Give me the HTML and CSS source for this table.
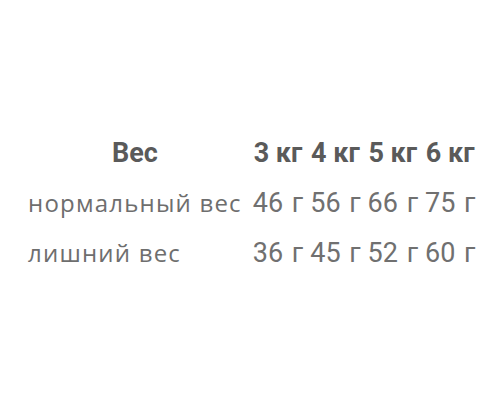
FILE: index.html
```html
<!DOCTYPE html>
<html lang="ru">
<head>
<meta charset="utf-8">
<link rel="stylesheet" href="styles.css">
</head>
<body>
<div class="page">
  <table class="weights">
    <thead>
      <tr>
        <th class="name">Вес</th>
        <th class="num">3 кг</th>
        <th class="num">4 кг</th>
        <th class="num">5 кг</th>
        <th class="num">6 кг</th>
      </tr>
    </thead>
    <tbody>
      <tr>
        <td class="name">нормальный вес</td>
        <td class="num">46 г</td>
        <td class="num">56 г</td>
        <td class="num">66 г</td>
        <td class="num">75 г</td>
      </tr>
      <tr>
        <td class="name">лишний вес</td>
        <td class="num">36 г</td>
        <td class="num">45 г</td>
        <td class="num">52 г</td>
        <td class="num">60 г</td>
      </tr>
    </tbody>
  </table>
</div>
</body>
</html>
```

FILE: styles.css
```css
html, body {
  margin: 0;
  padding: 0;
  background: #ffffff;
}
.page {
  width: 500px;
  height: 420px;
  padding: 128px 0 0 26px;
  box-sizing: border-box;
}
.weights {
  border-collapse: separate;
  border-spacing: 0;
  color: #6e6e6e;
}
.weights th, .weights td {
  padding: 0 4px 0 3px;
  height: 50px;
  line-height: 50px;
  white-space: nowrap;
  vertical-align: baseline;
}
.weights th {
  font-family: "Roboto", "DejaVu Sans", sans-serif;
  font-weight: 700;
  font-size: 27px;
  color: #5a5a5a;
  text-align: center;
}
.weights td {
  text-align: left;
}
.weights .name {
  padding: 0 8px 0 2px;
}
.weights td.name {
  font-family: "Open Sans", "Noto Sans", sans-serif;
  font-size: 24px;
  letter-spacing: 1.2px;
}
.weights td.num {
  font-family: "Roboto", "DejaVu Sans", sans-serif;
  font-size: 27px;
  word-spacing: 2px;
  color: #707070;
}
```
